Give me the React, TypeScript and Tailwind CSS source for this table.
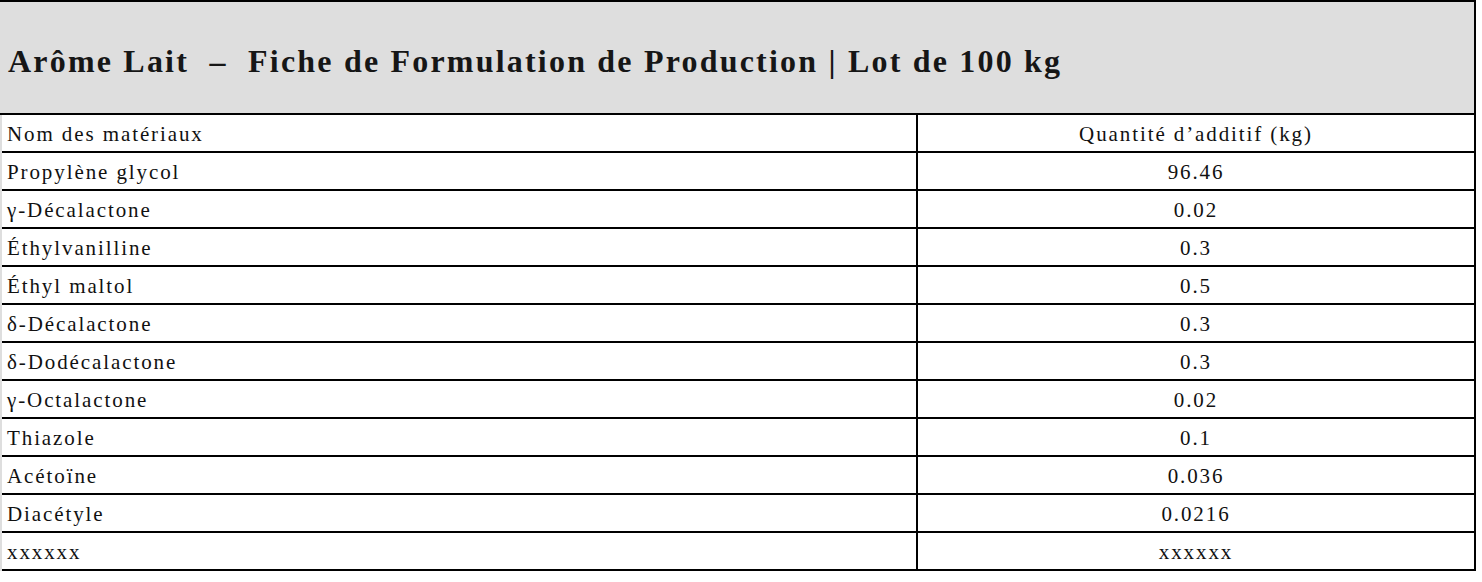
const rows: [string, string][] = [
  ["Propylène glycol", "96.46"],
  ["γ-Décalactone", "0.02"],
  ["Éthylvanilline", "0.3"],
  ["Éthyl maltol", "0.5"],
  ["δ-Décalactone", "0.3"],
  ["δ-Dodécalactone", "0.3"],
  ["γ-Octalactone", "0.02"],
  ["Thiazole", "0.1"],
  ["Acétoïne", "0.036"],
  ["Diacétyle", "0.0216"],
  ["xxxxxx", "xxxxxx"],
];

function Row({ name, qty }: { name: string; qty: string }) {
  return (
    <div className="grid grid-cols-[916px_1fr] h-[38px] border-b-2 border-black text-[21px] tracking-[1.9px] text-[#111]">
      <div className="pl-[5px] pt-[3px] flex items-center border-r-2 border-black">
        {name}
      </div>
      <div className="pt-[3px] flex items-center justify-center">{qty}</div>
    </div>
  );
}

export default function App() {
  return (
    <div
      className="w-[1482px] h-[582px] bg-white overflow-hidden"
      style={{ fontFamily: '"Liberation Serif", "DejaVu Serif", serif' }}
    >
      <div className="w-[1476px] border-t-2 border-r-2 border-black">
        <div className="h-[113px] bg-[#dedede] flex items-center pl-[8px] pt-[6px] border-b-2 border-black">
          <h1 className="text-[32px] font-bold tracking-[2.2px] text-[#161616]">
            Arôme Lait &nbsp;–&nbsp; Fiche de Formulation de Production | Lot de 100 kg
          </h1>
        </div>
        <div className="border-l-2 border-[#dedede]">
          <Row name="Nom des matériaux" qty="Quantité d’additif (kg)" />
          {rows.map(([n, q]) => (
            <Row key={n} name={n} qty={q} />
          ))}
        </div>
      </div>
    </div>
  );
}
